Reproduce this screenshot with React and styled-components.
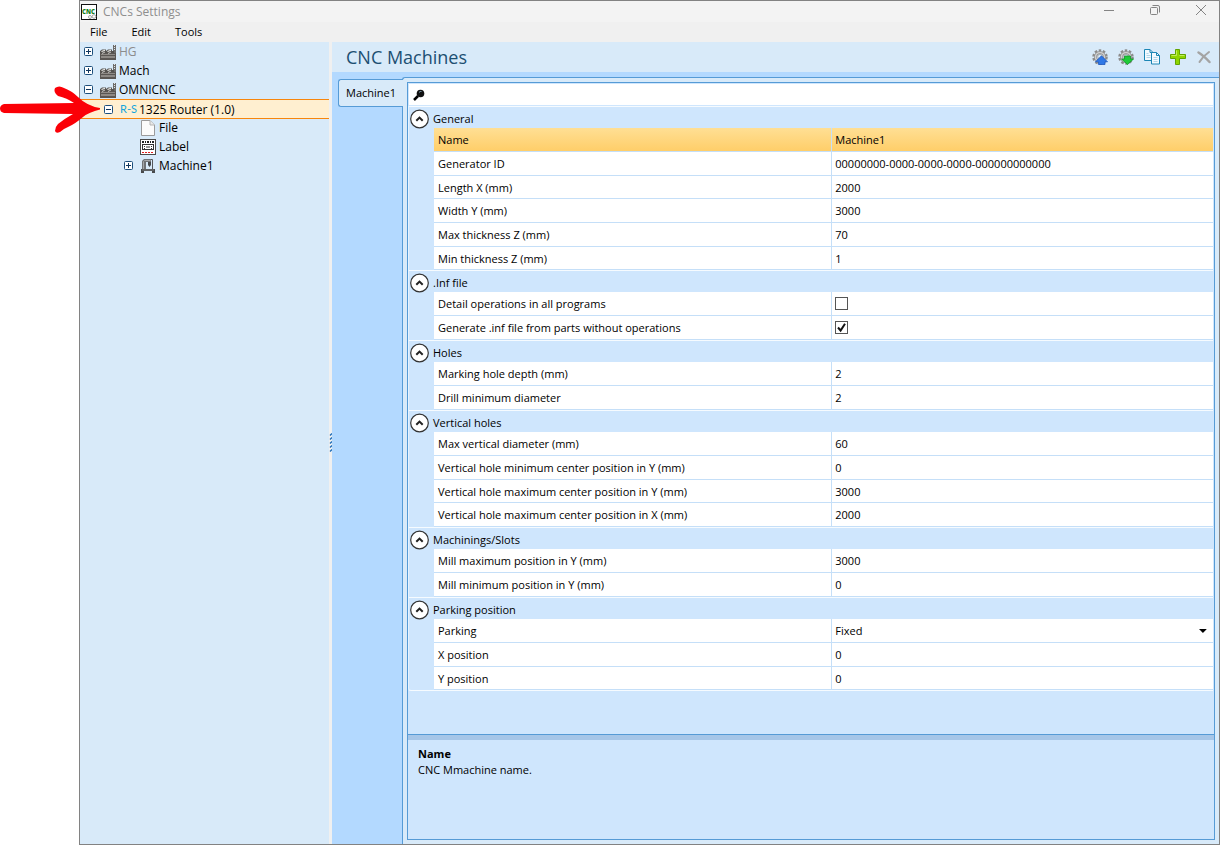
import React, { useState } from 'react';
import styled, { createGlobalStyle } from 'styled-components';

const GlobalStyle = createGlobalStyle`
  * {
    box-sizing: border-box;
  }
  body {
    margin: 0;
    background: #fff;
    color: #000;
    font-family: 'Open Sans', 'Noto Sans', sans-serif;
    font-size: 11px;
  }
  button,
  input,
  select {
    font: inherit;
    color: inherit;
    margin: 0;
  }
`;

const Page = styled.div`
  position: relative;
  display: flex;
  min-height: 100vh;
  padding-left: 79px;
`;

const Arrow = styled.svg`
  position: absolute;
  left: 0;
  top: 85px;
`;

const Window = styled.div`
  flex: 1;
  min-width: 0;
  display: flex;
  flex-direction: column;
  border: 1px solid #828282;
  background: #f0f0f0;
`;

const TitleBar = styled.header`
  display: flex;
  align-items: center;
  height: 21px;
  padding-left: 1px;
  gap: 6px;
  background: #f3f3f3;
`;

const WindowTitle = styled.span`
  flex: 1;
  font-size: 12px;
  color: #8e8e8e;
`;

const WindowControls = styled.div`
  display: flex;
  gap: 10px;
`;

const WindowButton = styled.button`
  display: flex;
  align-items: center;
  justify-content: center;
  width: 36px;
  height: 18px;
  padding: 0 0 4px;
  border: 0;
  background: none;
  color: #848484;
`;

const MenuBar = styled.nav`
  display: flex;
  height: 20px;
  gap: 4px;
`;

const MenuItem = styled.button`
  height: 18px;
  padding: 0 10px;
  border: 0;
  background: none;
`;

const Body = styled.div`
  flex: 1;
  display: flex;
`;

const TreePanel = styled.aside`
  width: 249px;
  flex: none;
  background: #d8eaf9;
`;

const Tree = styled.ul`
  margin: 0;
  padding: 0;
  list-style: none;
`;

const TreeRow = styled.li`
  display: flex;
  align-items: center;
  height: 19px;
  padding-left: ${(props) => 4 + props.$level * 20}px;
  font-size: 12px;
  color: ${(props) => (props.$muted ? '#8c8c8c' : '#000')};
  ${(props) =>
    props.$selected &&
    `
    height: 20px;
    margin-bottom: -1px;
    background: #ffefd0;
    border-top: 1px solid #f7860c;
    border-bottom: 1px solid #f7860c;
  `}
`;

const Expander = styled.button`
  display: flex;
  width: 9px;
  height: 9px;
  padding: 0;
  margin-right: 7px;
  border: 0;
  background: none;
  visibility: ${(props) => (props.$hidden ? 'hidden' : 'visible')};
`;

const TreeLabel = styled.span`
  padding-left: 3px;
  white-space: nowrap;
`;

const Splitter = styled.div`
  display: flex;
  align-items: center;
  justify-content: center;
  width: 3px;
  flex: none;
  background: #f0f0f0;
`;

const Main = styled.main`
  flex: 1;
  min-width: 0;
  display: flex;
  flex-direction: column;
  background: #b3d9ff;
`;

const PageHeader = styled.div`
  display: flex;
  align-items: center;
  height: 30px;
  padding: 0 7px 0 14px;
  background: #d8eaf9;
`;

const Heading = styled.h1`
  flex: 1;
  margin: 0;
  font-size: 18px;
  font-weight: 400;
  color: #1c4f72;
`;

const Toolbar = styled.div`
  display: flex;
  gap: 10px;
`;

const ToolButton = styled.button`
  display: flex;
  width: 16px;
  height: 16px;
  padding: 0;
  border: 0;
  background: none;
`;

const TabArea = styled.div`
  flex: 1;
  display: flex;
  padding: 5px 0 0 6px;
`;

const Tabs = styled.div`
  width: 65px;
  flex: none;
  margin-right: -1px;
  padding-top: 2px;
  z-index: 1;
`;

const Tab = styled.button`
  width: 100%;
  height: 28px;
  padding: 0 0 2px;
  border: 1px solid #569bd6;
  border-right: 0;
  border-radius: 3px 0 0 3px;
  background: #d8eaf9;
`;

const TabPage = styled.div`
  flex: 1;
  min-width: 0;
  display: flex;
  padding: 4px;
  border-left: 1px solid #569bd6;
  border-top: 1px solid #569bd6;
  border-radius: 3px 0 0 0;
  background: #d8eaf9;
`;

const Grid = styled.div`
  flex: 1;
  min-width: 0;
  display: flex;
  flex-direction: column;
  border: 1px solid #569bd6;
  background: #cfe6fd;
`;

const SearchBox = styled.label`
  display: flex;
  align-items: center;
  height: 21px;
  margin: 1px;
  padding-left: 4px;
  gap: 6px;
  background: #fff;
`;

const SearchInput = styled.input`
  flex: 1;
  padding: 0;
  border: 0;
  outline: 0;
  background: none;
`;

const Groups = styled.div`
  flex: 1;
  margin-right: 1px;
  padding-bottom: 43px;
`;

const Group = styled.section`
  border-left: 1px solid #e6f3ff;
  &:last-child {
    border-bottom: 1px solid #f6fbff;
    border-radius: 0 0 0 3px;
  }
`;

const GroupHeader = styled.button`
  display: flex;
  align-items: center;
  width: 100%;
  height: 22px;
  padding: 2px 0 0;
  gap: 4px;
  border: 0;
  border-top: 1px solid #f6fbff;
  background: none;
  text-align: left;
`;

const GroupRows = styled.div`
  padding-left: 25px;
`;

const Row = styled.div`
  display: flex;
  height: 24px;
  border-bottom: 1px solid #c5dff8;
  background: ${(props) =>
    props.$selected ? 'linear-gradient(#ffdf94, #ffce69)' : '#fff'};
  &:nth-child(3n) {
    height: 23px;
  }
`;

const RowLabel = styled.label`
  display: flex;
  align-items: center;
  width: calc(51% + 1px);
  padding-left: 4px;
  border-right: 1px solid #c5dff8;
  white-space: nowrap;
`;

const RowValue = styled.div`
  flex: 1;
  display: flex;
  align-items: center;
  padding: 0 6px 0 3px;
`;

const ValueInput = styled.input`
  width: 100%;
  padding: 0;
  border: 0;
  outline: 0;
  background: none;
`;

const ValueSelect = styled.select`
  appearance: none;
  width: 100%;
  padding: 0;
  border: 0;
  outline: 0;
  background: none;
`;

const CheckBox = styled.input`
  appearance: none;
  width: 13px;
  height: 13px;
  border: 1px solid #555;
  background: #fff;
  &:checked {
    background: #fff
      url("data:image/svg+xml,%3Csvg xmlns='http://www.w3.org/2000/svg' viewBox='0 0 11 11'%3E%3Cpath d='M2 5.5l2.6 3L9 1.8' fill='none' stroke='%23111' stroke-width='2'/%3E%3C/svg%3E");
  }
`;

const HelpPanel = styled.div`
  height: 105px;
  padding: 6px 10px;
  border-top: 1px solid #569bd6;
  box-shadow: inset 0 5px #a6c6e8;
`;

const HelpTitle = styled.h2`
  margin: 5px 0 0;
  font-size: 11px;
  font-weight: 700;
  line-height: 16px;
`;

const HelpText = styled.p`
  margin: 0;
  line-height: 16px;
`;

const AppLetters = styled.text`
  font-size: 6px;
  font-weight: 800;
  fill: #14801b;
`;

const RouterMark = styled.svg`
  overflow: visible;
`;

const RouterLetters = styled.text`
  font-family: 'Liberation Sans Narrow', 'Lato', sans-serif;
  font-size: 11px;
  fill: #16a6dc;
`;

function ExpanderIcon({ open }) {
  return (
    <svg width="9" height="9" viewBox="0 0 9 9">
      <rect x="0.5" y="0.5" width="8" height="8" rx="1" fill="#fff" stroke="#1d4f7c" />
      <path d={open ? 'M2 4.5h5' : 'M2 4.5h5M4.5 2v5'} stroke="#10365e" />
    </svg>
  );
}

function FactoryIcon() {
  return (
    <svg width="16" height="16" viewBox="0 0 16 16">
      <path d="M13 9V1h3v8z" fill="#6d6b69" />
      <path d="M14 1.5h1M14 3.5h1M14 5.5h1" stroke="#dfe5ea" />
      <path d="M0 9V7l2-1.500h4V7l2-1.500h4V7h2v2z" fill="#55524f" />
      <path d="M1.500 7.500L5 6.200M7.500 7.500L11 6.200" stroke="#eeeeec" strokeWidth="1.200" />
      <path d="M0 9h16v7H0z" fill="#5a5653" />
      <path d="M1 10.500h14" stroke="#8f8b87" />
      <path d="M1 13h14" stroke="#8d8985" strokeWidth="2" />
      <path d="M2 9.500l3-1.500M8 9.500l3-1.500" stroke="#c9c8c5" />
    </svg>
  );
}

function RouterIcon() {
  return (
    <RouterMark width="16" height="16" viewBox="0 0 16 16">
      <RouterLetters x="0" y="12">R-S</RouterLetters>
    </RouterMark>
  );
}

function FileIcon() {
  return (
    <svg width="16" height="16" viewBox="0 0 16 16">
      <path d="M1.500.5h8.500l4.500 4.500v10.500h-13z" fill="#fbfbfb" stroke="#9b9b9b" />
      <path d="M10 .5V5h4.500" fill="#e9e9e9" stroke="#b5b5b5" />
    </svg>
  );
}

function LabelIcon() {
  return (
    <svg width="16" height="16" viewBox="0 0 16 16">
      <rect x="0.5" y="0.5" width="15" height="15" fill="#fff" stroke="#4a4a4a" />
      <path d="M2 3h2M5 3h1M7 3h2M10 3h1M12 3h2" stroke="#222" strokeWidth="2" />
      <rect x="2.500" y="5.500" width="11" height="5" fill="none" stroke="#333" />
      <path d="M4 7.500h1M4 9.500h1M6 8h4M11 7.500h1M11 9.500h1" stroke="#333" />
      <path d="M2 13.500h12" stroke="#e02020" strokeDasharray="2 1" />
    </svg>
  );
}

function MachineIcon() {
  return (
    <svg width="16" height="16" viewBox="0 0 16 16">
      <path d="M2 12V3l2-2h7v3H6v8z" fill="#707376" />
      <path d="M3.500 11V3.500L4.500 2.500h6" fill="none" stroke="#a6a8aa" />
      <path d="M8 4h3v3L9.500 9 8 7z" fill="#44474a" />
      <path d="M11 1.500h1.500V11" fill="none" stroke="#55585b" />
      <path d="M1 11h14v2H1zM1 13h3v2H1zM12 13h3v2h-3z" fill="#484a4d" />
      <path d="M2 12h12" stroke="#75787b" />
    </svg>
  );
}

function AppIcon() {
  return (
    <svg width="16" height="16" viewBox="0 0 16 16" fill="none">
      <rect x="0.5" y="0.5" width="15" height="15" fill="#fff" stroke="#111" />
      <circle cx="9" cy="13" r="1.500" stroke="#a5a5a5" />
      <circle cx="13" cy="12.500" r="1.800" stroke="#a5a5a5" />
      <AppLetters x="1" y="10">CNC</AppLetters>
    </svg>
  );
}

function GearIcon({ direction }) {
  return (
    <svg width="16" height="16" viewBox="0 0 16 16">
      <circle cx="8" cy="8" r="6.500" fill="none" stroke="#8c8c8c" strokeWidth="2.500" strokeDasharray="2.500 1.584" />
      <circle cx="8" cy="8" r="4.500" fill="none" stroke="#8f8f8f" strokeWidth="3" />
      <circle cx="8" cy="8" r="4.500" fill="none" stroke="#cfcfcf" strokeWidth="1.600" />
      <circle cx="8" cy="7.500" r="2.300" fill="#d8eaf9" stroke="#9a9a9a" strokeWidth="0.800" />
      {direction === 'up' ? (
        <path d="M9.500 6.800l6 6H13v2.700H6.500v-2.700h-3z" fill="#2f78e6" stroke="#2058bd" strokeWidth="0.8" />
      ) : (
        <path d="M6.500 7h6v3h3L9.500 15.500l-6-5.500h3z" fill="#1fcb38" stroke="#0f9426" strokeWidth="0.8" />
      )}
    </svg>
  );
}

function CopyIcon() {
  return (
    <svg width="16" height="16" viewBox="0 0 16 16" fill="#f2faff" stroke="#1c86b5">
      <path d="M.5.5h5.500l3 3v8h-8.500z" />
      <path d="M6 .5v3h3" fill="none" />
      <path d="M2.500 4.500h2M2.500 6.500h4M2.500 8.500h4" stroke="#b0d5e8" />
      <path d="M7.500 3.500h5l3 3v8.500h-8z" />
      <path d="M12.500 3.500v3h3" fill="none" />
      <path d="M9.500 8.500h4M9.500 10.500h4M9.500 12.500h4" stroke="#b0d5e8" />
    </svg>
  );
}

function AddIcon() {
  return (
    <svg width="16" height="16" viewBox="0 0 16 16">
      <path d="M5.500.5h4v5h6v4h-6v6h-4v-6h-5v-4h5z" fill="#8ed500" stroke="#62a303" />
      <path d="M6.500 1.500v5h-5M9.500 6.500h5" fill="none" stroke="#c2ee58" />
    </svg>
  );
}

function DeleteIcon() {
  return (
    <svg width="16" height="16" viewBox="0 0 16 16" fill="none" stroke="#a4a4a4" strokeLinecap="round">
      <path d="M2.500 3.500q5 3 11 9.500" strokeWidth="2.500" />
      <path d="M13 3Q7 7 3.500 13" strokeWidth="2" />
    </svg>
  );
}

function CollapseIcon({ open }) {
  return (
    <svg width="20" height="20" viewBox="0 0 20 20">
      <circle cx="10.500" cy="10" r="8.800" fill="#fff" stroke="#333" strokeWidth="1.200" />
      <path
        d={open ? 'M7.300 11.800L10.500 8.600l3.200 3.200' : 'M7.300 8.500L10.500 11.700l3.200-3.200'}
        fill="none"
        stroke="#222"
        strokeWidth="2"
      />
    </svg>
  );
}

function SearchIcon() {
  return (
    <svg width="12" height="12" viewBox="0 0 12 12">
      <path d="M1 11l4-4" stroke="#000" strokeWidth="2.500" />
      <circle cx="7.500" cy="4.500" r="3.800" fill="#111" />
      <path d="M6 3.500q1-1.500 2.500-1" fill="none" stroke="#7b98a8" />
    </svg>
  );
}

const treeItems = [
  { label: 'HG', level: 0, Icon: FactoryIcon, expand: 'closed', muted: true },
  { label: 'Mach', level: 0, Icon: FactoryIcon, expand: 'closed' },
  { label: 'OMNICNC', level: 0, Icon: FactoryIcon, expand: 'open' },
  { label: '1325 Router (1.0)', level: 1, Icon: RouterIcon, expand: 'open', selected: true },
  { label: 'File', level: 2, Icon: FileIcon },
  { label: 'Label', level: 2, Icon: LabelIcon },
  { label: 'Machine1', level: 2, Icon: MachineIcon, expand: 'closed' },
];

const groups = [
  {
    title: 'General',
    rows: [
      { label: 'Name', value: 'Machine1', selected: true },
      { label: 'Generator ID', value: '00000000-0000-0000-0000-000000000000' },
      { label: 'Length X (mm)', value: '2000' },
      { label: 'Width Y (mm)', value: '3000' },
      { label: 'Max thickness Z (mm)', value: '70' },
      { label: 'Min thickness Z (mm)', value: '1' },
    ],
  },
  {
    title: '.Inf file',
    rows: [
      { label: 'Detail operations in all programs', type: 'check', value: false },
      { label: 'Generate .inf file from parts without operations', type: 'check', value: true },
    ],
  },
  {
    title: 'Holes',
    rows: [
      { label: 'Marking hole depth (mm)', value: '2' },
      { label: 'Drill minimum diameter', value: '2' },
    ],
  },
  {
    title: 'Vertical holes',
    rows: [
      { label: 'Max vertical diameter (mm)', value: '60' },
      { label: 'Vertical hole minimum center position in Y (mm)', value: '0' },
      { label: 'Vertical hole maximum center position in Y (mm)', value: '3000' },
      { label: 'Vertical hole maximum center position in X (mm)', value: '2000' },
    ],
  },
  {
    title: 'Machinings/Slots',
    rows: [
      { label: 'Mill maximum position in Y (mm)', value: '3000' },
      { label: 'Mill minimum position in Y (mm)', value: '0' },
    ],
  },
  {
    title: 'Parking position',
    rows: [
      { label: 'Parking', type: 'select', value: 'Fixed' },
      { label: 'X position', value: '0' },
      { label: 'Y position', value: '0' },
    ],
  },
];

function Value({ id, row }) {
  if (row.type === 'check') {
    return <CheckBox id={id} type="checkbox" defaultChecked={row.value} />;
  }
  if (row.type === 'select') {
    return (
      <>
        <ValueSelect id={id} defaultValue={row.value}>
          <option>{row.value}</option>
        </ValueSelect>
        <svg width="8" height="4" viewBox="0 0 8 4">
          <path d="M0 0h8L4 4z" />
        </svg>
      </>
    );
  }
  return <ValueInput id={id} type="text" defaultValue={row.value} />;
}

function PropertyGroup({ group, index }) {
  const [open, setOpen] = useState(true);

  return (
    <Group>
      <GroupHeader aria-expanded={open} onClick={() => setOpen(!open)}>
        <CollapseIcon open={open} />
        {group.title}
      </GroupHeader>
      {open && (
        <GroupRows>
          {group.rows.map((row, i) => {
            const id = `prop-${index}-${i}`;
            return (
              <Row key={id} $selected={row.selected}>
                <RowLabel htmlFor={id}>{row.label}</RowLabel>
                <RowValue>
                  <Value id={id} row={row} />
                </RowValue>
              </Row>
            );
          })}
        </GroupRows>
      )}
    </Group>
  );
}

function App() {
  return (
    <Page>
      <GlobalStyle />
      <Window>
        <TitleBar>
          <AppIcon />
          <WindowTitle>CNCs Settings</WindowTitle>
          <WindowControls>
            <WindowButton aria-label="Minimize">
              <svg width="10" height="10" viewBox="0 0 10 10">
                <path d="M0 5.500h10" stroke="currentColor" />
              </svg>
            </WindowButton>
            <WindowButton aria-label="Restore">
              <svg width="10" height="10" viewBox="0 0 10 10" fill="none" stroke="currentColor">
                <rect x="0.5" y="2.500" width="7" height="7" rx="1" />
                <path d="M2.500.5h5.500q1.500 0 1.500 1.500v5.500" />
              </svg>
            </WindowButton>
            <WindowButton aria-label="Close">
              <svg width="10" height="10" viewBox="0 0 10 10">
                <path d="M0 0l10 10M10 0L0 10" stroke="currentColor" />
              </svg>
            </WindowButton>
          </WindowControls>
        </TitleBar>
        <MenuBar>
          <MenuItem>File</MenuItem>
          <MenuItem>Edit</MenuItem>
          <MenuItem>Tools</MenuItem>
        </MenuBar>
        <Body>
          <TreePanel>
            <Tree>
              {treeItems.map(({ label, level, Icon, expand, muted, selected }) => (
                <TreeRow key={label} $level={level} $muted={muted} $selected={selected}>
                  <Expander $hidden={!expand} aria-label={`Toggle ${label}`}>
                    <ExpanderIcon open={expand === 'open'} />
                  </Expander>
                  <Icon />
                  <TreeLabel>{label}</TreeLabel>
                </TreeRow>
              ))}
            </Tree>
          </TreePanel>
          <Splitter>
            <svg width="3" height="20" viewBox="0 0 3 20">
              <path
                d="M1 2.500l2-2M1 6.500l2-2M1 10.500l2-2M1 14.500l2-2M1 18.500l2-2"
                stroke="#1f6db8"
                strokeWidth="1.400"
              />
            </svg>
          </Splitter>
          <Main>
            <PageHeader>
              <Heading>CNC Machines</Heading>
              <Toolbar>
                <ToolButton aria-label="Export settings">
                  <GearIcon direction="up" />
                </ToolButton>
                <ToolButton aria-label="Import settings">
                  <GearIcon direction="down" />
                </ToolButton>
                <ToolButton aria-label="Copy">
                  <CopyIcon />
                </ToolButton>
                <ToolButton aria-label="Add">
                  <AddIcon />
                </ToolButton>
                <ToolButton aria-label="Delete">
                  <DeleteIcon />
                </ToolButton>
              </Toolbar>
            </PageHeader>
            <TabArea>
              <Tabs>
                <Tab>Machine1</Tab>
              </Tabs>
              <TabPage>
                <Grid>
                  <SearchBox>
                    <SearchIcon />
                    <SearchInput type="text" aria-label="Search" />
                  </SearchBox>
                  <Groups>
                    {groups.map((group, i) => (
                      <PropertyGroup key={group.title} group={group} index={i} />
                    ))}
                  </Groups>
                  <HelpPanel>
                    <HelpTitle>Name</HelpTitle>
                    <HelpText>CNC Mmachine name.</HelpText>
                  </HelpPanel>
                </Grid>
              </TabPage>
            </TabArea>
          </Main>
        </Body>
      </Window>
      <Arrow width="102" height="50" viewBox="0 0 102 50">
        <path
          d="M4 19L74 18Q67 13 58 11q-5-4-3-8 4-3 9 0Q72 6 78 12q9 9 22 11v1.500Q89 27 83 32q-8 7-15 10-5 2-8 5-4 2-5-1 0-4 3-7 6-5 15-10L4 28q-4-1-4-4.500T4 19z"
          fill="#fb0007"
        />
      </Arrow>
    </Page>
  );
}

export default App;
